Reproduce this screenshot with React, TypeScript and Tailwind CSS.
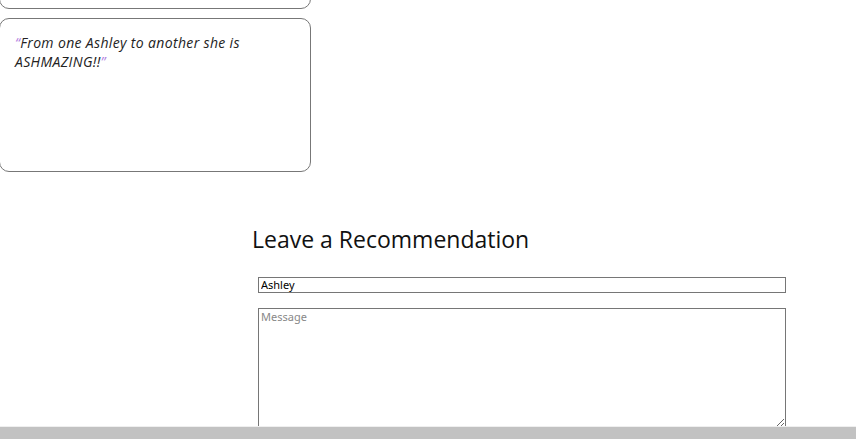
import React from 'react'

const font = { fontFamily: '"Open Sans", "DejaVu Sans", sans-serif' }

interface QuoteProps {
    text: string;
}

function QuoteCard({ text }: QuoteProps) {
    return (
        <div className="-ml-px w-[312px] h-[154px] rounded-[10px] border border-[#777] px-[15px] pt-[14px]">
            <p className="text-[14px] leading-[19px] italic tracking-[0.35px] text-[#222]">
                <span className="text-[#b07ee0]">&ldquo;</span>
                {text}
                <span className="text-[#b07ee0]">&rdquo;</span>
            </p>
        </div>
    )
}

export default function App() {
    return (
        <div className="min-h-screen bg-white overflow-hidden" style={font}>
            <div className="-mt-[145px] flex flex-col gap-[9px]">
                <QuoteCard text="She is the best teacher I have ever had!" />
                <QuoteCard text="From one Ashley to another she is ASHMAZING!!" />
            </div>

            <div className="ml-[252px] mt-[51px]">
                <h2 className="text-[23px] leading-[32px] text-[#111]">Leave a Recommendation</h2>
                <form className="ml-[6px] mt-[22px] flex flex-col gap-[15px]">
                    <input
                        type="text"
                        defaultValue="Ashley"
                        className="w-[528px] h-[16px] border border-[#767676] px-[2px] text-[11px] text-black outline-none"
                        style={{ fontFamily: '"Noto Sans", sans-serif' }}
                    />
                    <textarea
                        placeholder="Message"
                        className="w-[528px] h-[120px] border border-[#767676] px-[2px] py-0 text-[11px] placeholder:text-[#888] outline-none"
                        style={{ fontFamily: '"Noto Sans", sans-serif' }}
                    />
                </form>
            </div>

            <div className="fixed bottom-0 left-0 right-0 h-[13px] bg-[#c2c2c2] border-t border-[#efefef]" />
        </div>
    )
}
